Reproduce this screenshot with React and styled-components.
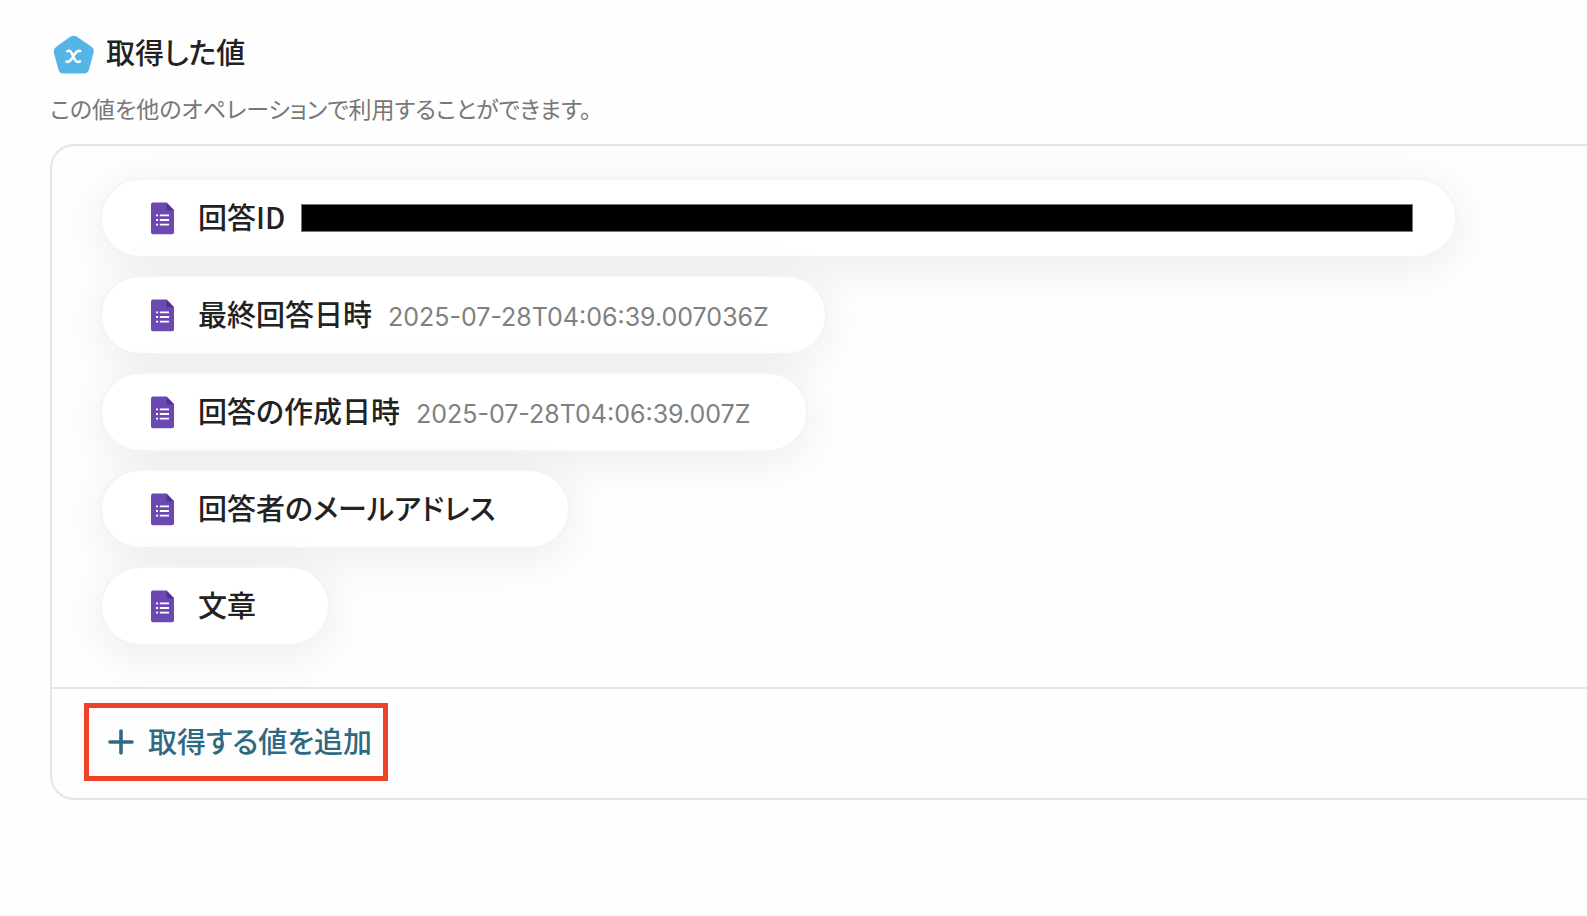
import React from "react";
import styled, { createGlobalStyle } from "styled-components";

const GlobalStyle = createGlobalStyle`
  * { box-sizing: border-box; }
  body {
    margin: 0;
    background: #fefefe;
    color: #222;
    font-family: Inter, "Noto Sans CJK JP", sans-serif;
    font-feature-settings: "palt";
    -webkit-font-smoothing: antialiased;
  }
`;

const Section = styled.section`
  padding: 32px 0 0 50px;
`;

const Header = styled.header`
  display: flex;
  align-items: flex-start;
  gap: 10px;
  height: 44px;
`;

const Title = styled.h2`
  margin: 0;
  font-family: "Noto Sans CJK JP", sans-serif;
  font-size: 29px;
  line-height: 38px;
  font-weight: 500;
`;

const Description = styled.p`
  margin: 14px 0 0;
  font-family: "Noto Sans CJK JP", sans-serif;
  font-size: 23px;
  line-height: 36px;
  color: #777;
`;

const Panel = styled.div`
  margin-top: 18px;
  border: 2px solid #e5e5e5;
  border-right: 0;
  border-radius: 24px 0 0 24px;
`;

const ValueList = styled.ul`
  display: flex;
  flex-direction: column;
  align-items: flex-start;
  gap: 17px;
  margin: 0;
  padding: 32px 48px 41px;
  list-style: none;
`;

const Chip = styled.li`
  display: flex;
  align-items: center;
  height: 80px;
  padding: 0 56px 0 46px;
  border: 2px solid #f4f4f4;
  border-radius: 40px;
  background: #fff;
  background-clip: padding-box;
  box-shadow: 0 8px 48px rgba(0, 0, 0, 0.08);
  white-space: nowrap;
`;

const ChipText = styled.div`
  display: flex;
  align-items: baseline;
  padding-bottom: 4px;
`;

const Label = styled.span`
  margin: 0 16px 0 22px;
  font-family: "Noto Sans CJK JP", sans-serif;
  font-size: 29px;
  line-height: 40px;
  font-weight: 500;
`;

const Value = styled.span`
  font-size: 25px;
  line-height: 28px;
  color: #808080;
`;

const Redacted = styled.span`
  width: 1112px;
  height: 28px;
  margin-right: -14px;
  border: 1px solid #777;
  background: #000;
`;

const Footer = styled.footer`
  display: flex;
  align-items: flex-start;
  height: 111px;
  padding: 14px 32px 0;
  border-top: 2px solid #e5e5e5;
`;

const AddButton = styled.button`
  display: flex;
  align-items: center;
  gap: 14px;
  height: 78px;
  padding: 0 11px 0 19px;
  border: 5px solid #ee4128;
  background: transparent;
  color: #2f6a82;
  font-family: "Noto Sans CJK JP", sans-serif;
  font-feature-settings: inherit;
  font-size: 29px;
  line-height: 40px;
  font-weight: 500;
`;

const ButtonText = styled.span`
  padding-bottom: 4px;
`;

const VariableIcon = () => (
  <svg width="46" height="46" viewBox="0 0 46 46" aria-hidden="true">
    <path
      d="M20.2 4.8Q23.6 2.5 27 4.8L41.6 14.7Q44.4 16.8 43.6 20.4L39.2 37Q37.8 41.6 34 41.6H13.6Q9.6 41.6 8.4 37.4L4 21.4Q3.2 17.2 6 15Z"
      fill="#54b6e6"
    />
    <path
      d="M17.2 19.3C20.4 17.8 21.4 20 23.2 24.4C25 28.8 26.6 31 30 29.4M30.2 19C26.8 18.2 25.2 20.8 23.2 24.4C21.4 27.8 19.6 30.8 16.6 29.6"
      fill="none"
      stroke="#fff"
      strokeWidth="2.5"
      strokeLinecap="round"
    />
  </svg>
);

const FormIcon = () => (
  <svg width="28" height="34" viewBox="0 0 28 34" aria-hidden="true">
    <path d="M5 1.6H18.8L26 9V31.2Q26 33.2 24 33.2H5Q3 33.2 3 31.2V3.6Q3 1.6 5 1.6Z" fill="#6c48b2" />
    <path d="M18.6 2.2L26 9.6H18.6Z" fill="#4f3389" />
    <path
      d="M8 14.4H10M8 19H10M8 23.6H10M11.8 14.4H21M11.8 19H21M11.8 23.6H21"
      stroke="#fff"
      strokeWidth="1.8"
    />
  </svg>
);

const PlusIcon = () => (
  <svg width="26" height="26" viewBox="0 0 26 26" aria-hidden="true">
    <path d="M13 2V24M2 13H24" stroke="currentColor" strokeWidth="3.6" strokeLinecap="round" />
  </svg>
);

const values = [
  { label: "回答ID", redacted: true },
  { label: "最終回答日時", value: "2025-07-28T04:06:39.007036Z" },
  { label: "回答の作成日時", value: "2025-07-28T04:06:39.007Z" },
  { label: "回答者のメールアドレス" },
  { label: "文章" },
];

export default function App() {
  return (
    <>
      <GlobalStyle />
      <Section>
        <Header>
          <VariableIcon />
          <Title>取得した値</Title>
        </Header>
        <Description>この値を他のオペレーションで利用することができます。</Description>
        <Panel>
          <ValueList>
            {values.map(({ label, value, redacted }) => (
              <Chip key={label}>
                <FormIcon />
                <ChipText>
                  <Label>{label}</Label>
                  {value && <Value>{value}</Value>}
                </ChipText>
                {redacted && <Redacted />}
              </Chip>
            ))}
          </ValueList>
          <Footer>
            <AddButton type="button">
              <PlusIcon />
              <ButtonText>取得する値を追加</ButtonText>
            </AddButton>
          </Footer>
        </Panel>
      </Section>
    </>
  );
}
